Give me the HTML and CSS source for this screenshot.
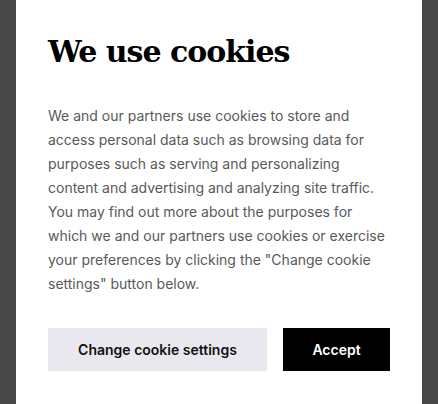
FILE: index.html
```html
<!DOCTYPE html>
<html lang="en">
<head>
<meta charset="utf-8">
<link rel="stylesheet" href="styles.css">
</head>
<body>
<div class="dialog">
  <h1 class="title">We use cookies</h1>
  <p class="text">We and our partners use cookies to store and access personal data such as browsing data for purposes such as serving and personalizing content and advertising and analyzing site traffic. You may find out more about the purposes for which we and our partners use cookies or exercise your preferences by clicking the "Change cookie settings" button below.</p>
  <div class="actions">
    <button class="btn btn-secondary">Change cookie settings</button>
    <button class="btn btn-primary">Accept</button>
  </div>
</div>
</body>
</html>
```
FILE: styles.css
```css
html, body {
  margin: 0;
  padding: 0;
  height: 100%;
}
body {
  background: #474747;
  overflow: hidden;
}
.dialog {
  margin-left: 16px;
  width: 406px;
  height: 404px;
  background: #fff;
  box-sizing: border-box;
  padding: 32px 32px 0 32px;
}
.title {
  margin: 0;
  font-family: "DejaVu Serif", "Liberation Serif", serif;
  font-weight: bold;
  font-size: 30px;
  line-height: 40px;
  color: #000;
  letter-spacing: -1px;
}
.text {
  margin: 32px 0 0 0;
  font-family: Inter, "Liberation Sans", sans-serif;
  font-size: 14px;
  line-height: 24px;
  color: #595959;
}
.actions {
  display: flex;
  gap: 16px;
  margin-top: 32px;
}
.btn {
  border: none;
  font-family: Inter, "Liberation Sans", sans-serif;
  font-weight: 600;
  font-size: 14px;
  height: 43px;
  padding: 0;
  cursor: pointer;
}
.btn-secondary {
  width: 219px;
  background: #e8e8ee;
  color: #111;
}
.btn-primary {
  width: 107px;
  background: #000;
  color: #fff;
}
```
